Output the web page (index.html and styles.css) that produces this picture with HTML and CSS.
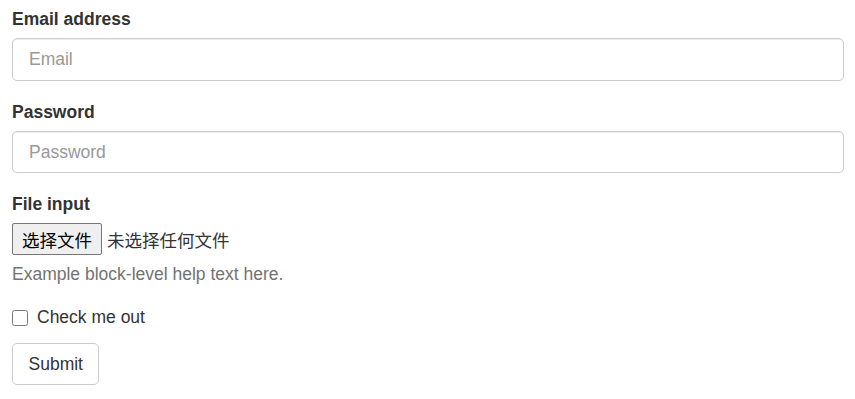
FILE: index.html
```html
<html>
<head>
<title>Form</title>
<link rel="stylesheet" href="styles.css">
</head>
<body>
<form class="page-form">
  <div class="form-group">
    <label class="field-label" for="email">Email address</label>
    <input class="form-control" type="email" id="email" placeholder="Email">
  </div>
  <div class="form-group">
    <label class="field-label" for="pass">Password</label>
    <input class="form-control" type="password" id="pass" placeholder="Password">
  </div>
  <div class="form-group">
    <label class="field-label">File input</label>
    <div class="file-row">
      <button type="button" class="file-btn">选择文件</button>
      <span class="file-name">未选择任何文件</span>
    </div>
    <p class="help-block">Example block-level help text here.</p>
  </div>
  <div class="checkbox">
    <label class="check-label"><input type="checkbox" class="check-box"> Check me out</label>
  </div>
  <button type="submit" class="btn-default">Submit</button>
</form>
</body>
</html>
```

FILE: styles.css
```css
body {
  margin: 0;
  font-family: "Liberation Sans", Arial, "Noto Sans CJK SC", sans-serif;
  font-size: 17.5px;
  line-height: 25px;
  color: #333;
  background: #fff;
}
.page-form {
  padding: 7px 11px 0 12px;
}
.form-group {
  margin-bottom: 18.75px;
}
.field-label {
  display: block;
  font-weight: bold;
  margin-bottom: 6.25px;
}
.form-control {
  display: block;
  box-sizing: border-box;
  width: 100%;
  height: 42.5px;
  padding: 7.5px 16px;
  font-family: inherit;
  font-size: 17.5px;
  line-height: 25px;
  color: #555;
  background: #fff;
  border: 1px solid #ccc;
  border-radius: 5px;
  box-shadow: inset 0 1px 1px rgba(0,0,0,.075);
  outline: none;
}
.form-control::placeholder {
  color: #999;
}
.file-row {
  display: flex;
  align-items: center;
  height: 32px;
}
.file-btn {
  box-sizing: border-box;
  height: 32px;
  padding: 0 9px;
  margin-right: 5px;
  font-family: "Noto Sans CJK SC", sans-serif;
  font-size: 17.5px;
  color: #000;
  background: #efefef;
  border: 1px solid #767676;
  border-radius: 2px;
}
.file-name {
  font-family: "Noto Sans CJK SC", sans-serif;
  font-size: 17.5px;
  color: #333;
}
.help-block {
  margin: 6.25px 0 12.5px;
  color: #737373;
}
.checkbox {
  margin: 12.5px 0;
}
.check-label {
  display: inline-flex;
  align-items: center;
  cursor: pointer;
}
.check-box {
  width: 16px;
  height: 16px;
  margin: 1px 9px 0 0;
}
.btn-default {
  box-sizing: border-box;
  height: 42.5px;
  padding: 7.5px 15.5px;
  font-family: inherit;
  font-size: 17.5px;
  line-height: 25px;
  color: #333;
  background: #fff;
  border: 1px solid #ccc;
  border-radius: 5px;
}
```
